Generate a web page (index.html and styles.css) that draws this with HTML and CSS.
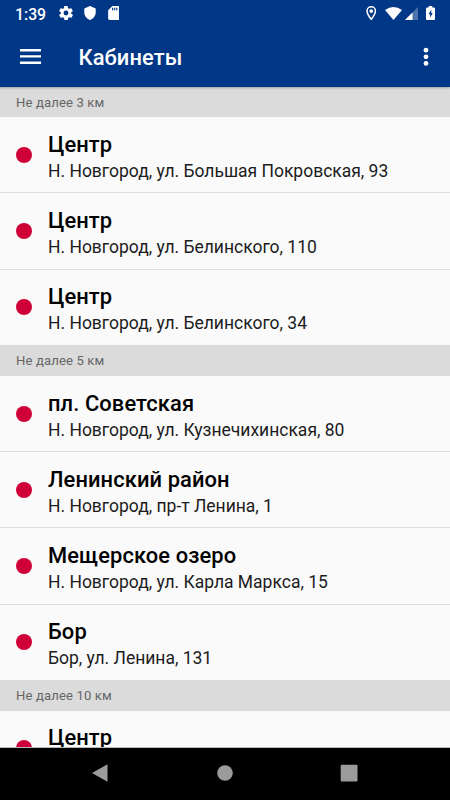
FILE: index.html
```
<!DOCTYPE html>
<html lang="ru">
<head>
<meta charset="utf-8">
<title>Кабинеты</title>
<link rel="stylesheet" href="styles.css">
</head>
<body>
<div class="screen">
  <header class="top">
    <div class="status">
      <span class="time">1:39</span>
      <svg class="s-gear" viewBox="2 2 20 20"><path fill-rule="evenodd" d="M19.4 13a7.500 7.500 0 0 0 0-2l2.100-1.600a.5.5 0 0 0 .1-.7l-2-3.400a.5.5 0 0 0-.6-.2l-2.500 1a7.300 7.300 0 0 0-1.700-1l-.4-2.600a.5.500 0 0 0-.5-.5h-4a.5.500 0 0 0-.5.500L9.200 5.100a7.300 7.300 0 0 0-1.700 1L5 5.100a.5.500 0 0 0-.6.2l-2 3.400a.5.500 0 0 0 .1.700L4.600 11a7.500 7.500 0 0 0 0 2l-2.100 1.600a.5.500 0 0 0-.1.700l2 3.400a.5.500 0 0 0 .6.2l2.500-1a7.300 7.300 0 0 0 1.700 1l.4 2.600a.5.500 0 0 0 .5.500h4a.5.500 0 0 0 .5-.5l.4-2.600a7.300 7.300 0 0 0 1.700-1l2.500 1a.5.500 0 0 0 .6-.2l2-3.400a.5.500 0 0 0-.1-.7zM12 15.500a3.500 3.500 0 1 1 0-7 3.500 3.500 0 0 1 0 7z"/></svg>
      <svg class="s-shield" viewBox="3 1 18 22"><path d="M12 1 3 5v6c0 5.550 3.840 10.740 9 12 5.160-1.260 9-6.450 9-12V5z"/></svg>
      <svg class="s-card" viewBox="4 2 16 20"><path fill-rule="evenodd" d="M18 2h-8L4 8v12a2 2 0 0 0 2 2h12a2 2 0 0 0 2-2V4a2 2 0 0 0-2-2zM9.500 4.500h1.700V8H9.500zm3 0h1.700V8h-1.700zm3 0h1.700V8h-1.700z"/></svg>
      <span class="spacer"></span>
      <svg class="s-pin" viewBox="4.500 1.500 15 21"><path fill-rule="evenodd" d="M12 1.500A7.200 7.200 0 0 0 4.800 8.700C4.800 14.500 12 22.500 12 22.500s7.200-8 7.200-13.800A7.200 7.200 0 0 0 12 1.500zm0 2.200a5 5 0 0 1 5 5c0 3-2.800 7.300-5 10.200-2.200-2.900-5-7.200-5-10.200a5 5 0 0 1 5-5z"/><circle cx="12" cy="8.800" r="2.700"/></svg>
      <svg class="s-wifi" viewBox="0 0 17 13"><path d="M0 3Q8.500-3 17 3L8.500 13z"/></svg>
      <svg class="s-signal" viewBox="0 0 13 13"><path class="dim" d="M13 0V13H0z"/><path d="M7.500 5.500V13H0z"/></svg>
      <svg class="s-battery" viewBox="0 0 9 14"><path fill-rule="evenodd" d="M2.700 0h3.600v1.400H8a1 1 0 0 1 1 1V13a1 1 0 0 1-1 1H1a1 1 0 0 1-1-1V2.400a1 1 0 0 1 1-1h1.700zM5.300 3.700 2.500 8.200h1.700v3.500l2.500-4.700H5.300z"/></svg>
    </div>
    <div class="appbar">
      <svg class="menu" viewBox="0 0 21 15"><path d="M0 0h21v2.400H0zM0 6.200h21v2.400H0zM0 12.500h21v2.400H0z"/></svg>
      <h1>Кабинеты</h1>
      <svg class="more" viewBox="0 0 6 20"><circle cx="3" cy="3.200" r="2.400"/><circle cx="3" cy="9.800" r="2.400"/><circle cx="3" cy="16.400" r="2.400"/></svg>
    </div>
  </header>
  <main class="list">
    <h2>Не далее 3 км</h2>
    <ul>
      <li><i class="dot"></i><div><h3>Центр</h3><p>Н. Новгород, ул. Большая Покровская, 93</p></div></li>
      <li><i class="dot"></i><div><h3>Центр</h3><p>Н. Новгород, ул. Белинского, 110</p></div></li>
      <li><i class="dot"></i><div><h3>Центр</h3><p>Н. Новгород, ул. Белинского, 34</p></div></li>
    </ul>
    <h2>Не далее 5 км</h2>
    <ul>
      <li><i class="dot"></i><div><h3>пл. Советская</h3><p>Н. Новгород, ул. Кузнечихинская, 80</p></div></li>
      <li><i class="dot"></i><div><h3>Ленинский район</h3><p>Н. Новгород, пр-т Ленина, 1</p></div></li>
      <li><i class="dot"></i><div><h3>Мещерское озеро</h3><p>Н. Новгород, ул. Карла Маркса, 15</p></div></li>
      <li><i class="dot"></i><div><h3>Бор</h3><p>Бор, ул. Ленина, 131</p></div></li>
    </ul>
    <h2>Не далее 10 км</h2>
    <ul>
      <li><i class="dot"></i><div><h3>Центр</h3></div></li>
    </ul>
  </main>
  <nav class="nav">
    <svg viewBox="0 0 18 18"><path d="M0 9 15.500 .3V17.700z"/></svg>
    <svg viewBox="0 0 18 18"><circle cx="9" cy="9" r="7.800"/></svg>
    <svg viewBox="0 0 18 18"><rect x=".7" y=".7" width="16.800" height="16.800" rx="1"/></svg>
  </nav>
</div>
</body>
</html>
```
FILE: styles.css
```
* { box-sizing: border-box; margin: 0; padding: 0; }
body { font-family: Roboto, sans-serif; overflow: hidden; }
svg { display: block; flex: none; }
.screen { width: 450px; height: 800px; display: flex; flex-direction: column; background: #fafafa; overflow: hidden; }
.top { flex: none; height: 87px; background: #003786; color: #fff; fill: #fff; position: relative; z-index: 1; box-shadow: 0 1px 2px rgba(0, 0, 0, .28); }
.status { height: 26px; display: flex; align-items: center; padding: 0 15.500px 0 15px; }
.time { width: 43.500px; font-size: 15.800px; font-weight: 500; line-height: 27px; padding-top: 2px; }
.spacer { flex: 1; }
.s-gear { width: 14px; height: 14px; margin-right: 11px; }
.s-shield { width: 12px; height: 14px; margin-right: 12px; }
.s-card { width: 11.500px; height: 14px; }
.s-pin { width: 10.500px; height: 14.500px; margin-right: 9px; }
.s-wifi { width: 17px; height: 13px; margin-right: 2.500px; }
.s-signal { width: 13px; height: 13px; margin-right: 8px; }
.s-battery { width: 9px; height: 14px; }
.dim { opacity: .3; }
.appbar { height: 61px; display: flex; align-items: center; padding: 0 21px 0 20px; }
.menu { width: 21px; height: 15px; }
.appbar h1 { flex: 1; margin-left: 37.500px; font-size: 21.900px; font-weight: 500; line-height: 28px; padding-top: 2px; letter-spacing: .1px; }
.more { width: 6px; height: 20px; }
.list { flex: 1; min-height: 0; overflow: hidden; border-bottom: 1px solid #b8b8b8; }
.list h2 { height: 30.900px; line-height: 32.500px; padding-left: 16px; background: #dbdbdb; color: #666; font-size: 13.100px; font-weight: 400; letter-spacing: .13px; }
.list h2:first-child { height: 30.200px; line-height: 31px; }
.list ul { list-style: none; }
.list li { height: 76.250px; display: flex; align-items: center; padding-left: 16px; border-bottom: 1px solid #dedede; }
.list li:last-child { height: 75.300px; border-bottom: 0; }
.dot { width: 16px; height: 16px; margin-right: 16px; border-radius: 50%; background: #cf0037; flex: none; }
.list li div { height: 56px; padding-top: 3px; white-space: nowrap; color: #000; }
.list h3 { font-size: 21.900px; font-weight: 500; line-height: 29.500px; letter-spacing: .1px; }
.list p { margin-top: -.5px; font-size: 17.500px; line-height: 24px; letter-spacing: -.01px; color: #1c1c1c; }
.nav { flex: none; height: 52.500px; background: #000; fill: #9b9b9b; display: flex; align-items: center; justify-content: center; gap: 106px; padding-right: 1px; padding-bottom: 1px; }
.nav svg { width: 18px; height: 18px; }
```
